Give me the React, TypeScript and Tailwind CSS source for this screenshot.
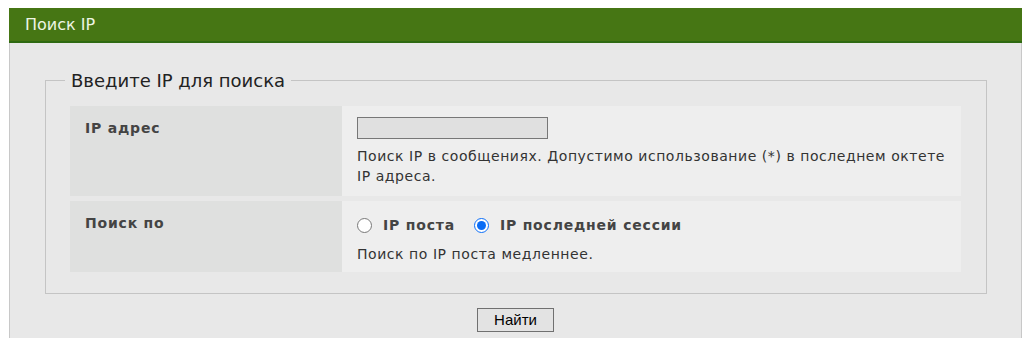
import { useState } from "react";

export default function App() {
  const [mode, setMode] = useState("session");

  return (
    <div className="min-h-screen bg-white pt-2 pl-[9px] pr-[10px] font-['DejaVu_Sans',Verdana,sans-serif] text-[14px] tracking-[0.55px] text-[#333]">
      <div className="h-[35px] bg-[#467614] border-b-2 border-[#2f6a12] pl-4 flex items-center text-[16px] tracking-normal text-[#eef5e4]">
        Поиск IP
      </div>

      <div className="bg-[#e8e8e8] border-x border-[#c8c8c8] pt-[24px] pb-[7px] min-h-[295px]">
        <fieldset className="ml-[35px] mr-[34px] border border-[#c4c4c4] pl-[24px] pr-[25px] pt-[12px] pb-[21px]">
          <legend className="ml-[-5px] px-[6px] text-[18px] tracking-normal text-[#222]">Введите IP для поиска</legend>

          <div className="flex flex-col gap-[5px]">
            <div className="flex min-h-[90px]">
              <div className="w-[272px] shrink-0 bg-[#dfe0df] pl-[15px] pt-[12px] font-bold tracking-[0.8px] text-[#444]">IP адрес</div>
              <div className="flex-1 bg-[#eeeeee] pl-[15px] pt-[11px] pb-[10px]">
                <input
                  type="text"
                  className="block w-[191px] h-[22px] bg-[#e0e0e0] border border-[#777] outline-none px-1"
                />
                <p className="mt-[7px] leading-[20px]">
                  Поиск IP в сообщениях. Допустимо использование (*) в последнем октете
                  <br />
                  IP адреса.
                </p>
              </div>
            </div>

            <div className="flex min-h-[71px]">
              <div className="w-[272px] shrink-0 bg-[#dfe0df] pl-[15px] pt-[12px] font-bold tracking-[0.8px] text-[#444]">Поиск по</div>
              <div className="flex-1 bg-[#eeeeee] pl-[15px] pt-[14px]">
                <div className="flex items-center font-bold tracking-[0.8px] text-[#444]">
                  <label className="flex items-center gap-[11px] mr-[19px]">
                    <input
                      type="radio"
                      name="mode"
                      checked={mode === "post"}
                      onChange={() => setMode("post")}
                      className="w-[15px] h-[15px] m-0 accent-[#0a6cf5]"
                    />
                    IP поста
                  </label>
                  <label className="flex items-center gap-[11px]">
                    <input
                      type="radio"
                      name="mode"
                      checked={mode === "session"}
                      onChange={() => setMode("session")}
                      className="w-[15px] h-[15px] m-0 accent-[#0a6cf5]"
                    />
                    IP последней сессии
                  </label>
                </div>
                <p className="mt-[8px] leading-[20px]">Поиск по IP поста медленнее.</p>
              </div>
            </div>
          </div>
        </fieldset>

        <div className="flex justify-center mt-[14px]">
          <button className="w-[77px] h-[24px] bg-[#e3e3e3] border border-[#707070] text-[15px] tracking-normal text-black font-['Liberation_Sans',Arial,sans-serif]">
            Найти
          </button>
        </div>
      </div>
    </div>
  );
}
